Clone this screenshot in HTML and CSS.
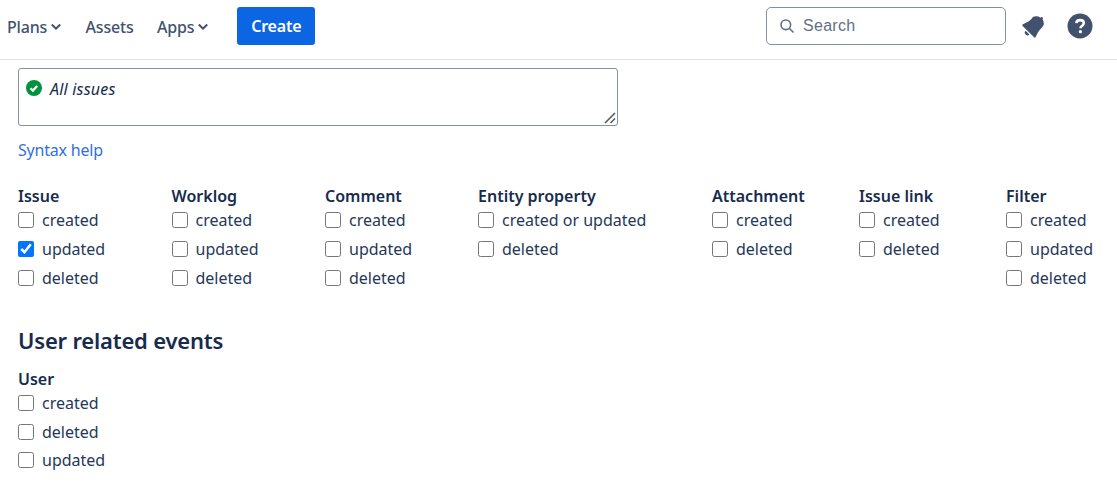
FILE: index.html
```html
<!DOCTYPE html>
<html lang="en">

<head>
    <meta charset="UTF-8">
    <title>Webhook</title>
    <link rel="stylesheet" href="styles.css">
</head>

<body>
    <nav class="topbar">
        <a class="nav-item">Plans
            <svg class="chevron" viewBox="0 0 12 8"><path d="M1.800 1.500 6 5.700l4.200-4.200" /></svg>
        </a>
        <a class="nav-item">Assets</a>
        <a class="nav-item">Apps
            <svg class="chevron" viewBox="0 0 12 8"><path d="M1.800 1.500 6 5.700l4.200-4.200" /></svg>
        </a>
        <button class="create-btn">Create</button>
        <div class="search">
            <svg class="search-icon" viewBox="0 0 16 16"><circle cx="6.800" cy="6.800" r="4.800" /><path d="m10.500 10.500 4 4" /></svg>
            <span>Search</span>
        </div>
        <svg class="bell" viewBox="0 0 24 24">
            <path d="M6.485 17.669a2 2 0 0 0 2.829 0l-2.829-2.83a2 2 0 0 0 0 2.83zm4.897-12.191l-.725.725c-.782.782-2.21 1.813-3.206 2.311l-3.017 1.509c-.495.248-.584.774-.187 1.171l8.556 8.556c.398.396.922.313 1.171-.188l1.51-3.016c.494-.988 1.526-2.42 2.311-3.206l.725-.726a5.048 5.048 0 0 0 .64-6.356 1.01 1.01 0 1 0-1.557-1.27 5.047 5.047 0 0 0-6.72.49z" />
        </svg>
        <svg class="help" viewBox="0 0 26 26">
            <circle cx="13" cy="13" r="12.500" />
            <path class="help-mark" d="M9.300 10.200c.2-2 1.700-3.100 3.800-3.100s3.700 1.200 3.700 3c0 1.500-.9 2.200-1.900 2.900-.9.600-1.400 1.100-1.400 2.200" />
            <circle class="help-dot" cx="13.400" cy="18.700" r="1.600" />
        </svg>
    </nav>

    <main class="content">
        <div class="jql-box">
            <svg class="ok-icon" viewBox="0 0 16 16">
                <circle cx="8" cy="8" r="8" />
                <path d="m4.500 8.300 2.400 2.300 4.300-4.600" />
            </svg>
            <i>All issues</i>
            <svg class="resize-grip" viewBox="0 0 12 12"><path d="M1 11 11 1M6.500 11 11 6.500" /></svg>
        </div>
        <a class="syntax-link">Syntax help</a>

        <div class="event-groups">
            <section>
                <h4>Issue</h4>
                <label><input type="checkbox">created</label>
                <label><input type="checkbox" checked>updated</label>
                <label><input type="checkbox">deleted</label>
            </section>
            <section>
                <h4>Worklog</h4>
                <label><input type="checkbox">created</label>
                <label><input type="checkbox">updated</label>
                <label><input type="checkbox">deleted</label>
            </section>
            <section>
                <h4>Comment</h4>
                <label><input type="checkbox">created</label>
                <label><input type="checkbox">updated</label>
                <label><input type="checkbox">deleted</label>
            </section>
            <section>
                <h4>Entity property</h4>
                <label><input type="checkbox">created or updated</label>
                <label><input type="checkbox">deleted</label>
            </section>
            <section>
                <h4>Attachment</h4>
                <label><input type="checkbox">created</label>
                <label><input type="checkbox">deleted</label>
            </section>
            <section>
                <h4>Issue link</h4>
                <label><input type="checkbox">created</label>
                <label><input type="checkbox">deleted</label>
            </section>
            <section>
                <h4>Filter</h4>
                <label><input type="checkbox">created</label>
                <label><input type="checkbox">updated</label>
                <label><input type="checkbox">deleted</label>
            </section>
        </div>

        <h3>User related events</h3>
        <section class="user-events">
            <h4>User</h4>
            <label><input type="checkbox">created</label>
            <label><input type="checkbox">deleted</label>
            <label><input type="checkbox">updated</label>
        </section>
    </main>
</body>

</html>
```

FILE: styles.css
```css
body {
    font-family: "Noto Sans", "Open Sans", sans-serif;
    font-size: 16px;
    color: #172b4d;
    background-color: #fff;
    margin: 0;
    overflow: hidden;
}

.topbar {
    display: flex;
    align-items: center;
    height: 59px;
    box-sizing: border-box;
    padding: 0 0 7px 7px;
    box-shadow: 0 1px 0 #dfe1e6;
    color: #42526e;
}

.nav-item {
    display: flex;
    align-items: center;
    gap: 3px;
    margin-top: 2px;
    margin-right: 23.500px;
    font-size: 16px;
    font-weight: 500;
    letter-spacing: -0.2px;
}

.chevron {
    width: 12px;
    height: 8px;
    fill: none;
    stroke: #42526e;
    stroke-width: 2;
}

.create-btn {
    width: 78px;
    height: 38px;
    margin-left: 4.500px;
    border: none;
    border-radius: 3px;
    background-color: #0c66e4;
    color: #fff;
    font: 600 16px "Noto Sans", sans-serif;
    letter-spacing: -0.2px;
}

.search {
    display: flex;
    align-items: center;
    gap: 8px;
    width: 240px;
    height: 38px;
    margin-left: auto;
    padding-left: 12px;
    box-sizing: border-box;
    border: 1px solid #8590a2;
    border-radius: 5px;
    color: #626f86;
    font-family: "Liberation Sans", Arial, sans-serif;
    letter-spacing: 0.3px;
}

.search-icon {
    width: 16px;
    height: 16px;
    fill: none;
    stroke: #626f86;
    stroke-width: 1.600;
}

.bell {
    width: 32px;
    height: 32px;
    margin-top: 1px;
    margin-left: 11px;
    fill: #42526e;
}

.help {
    width: 26px;
    height: 26px;
    margin-left: 18px;
    margin-right: 24px;
    fill: #42526e;
}

.help-mark {
    fill: none;
    stroke: #fff;
    stroke-width: 2.600;
}

.help-dot {
    fill: #fff;
}

.content {
    padding: 9px 18px 0;
}

.jql-box {
    position: relative;
    display: flex;
    align-items: flex-start;
    gap: 8px;
    width: 600px;
    height: 58px;
    box-sizing: border-box;
    padding: 10px 7px 0;
    border: 1px solid #8590a2;
    border-radius: 3px;
    line-height: 20px;
    letter-spacing: 0.2px;
}

.ok-icon {
    width: 16px;
    height: 16px;
    margin-top: 1px;
    fill: #00923f;
}

.ok-icon path {
    fill: none;
    stroke: #fff;
    stroke-width: 2.200;
}

.resize-grip {
    position: absolute;
    right: 1px;
    bottom: 1px;
    width: 12px;
    height: 12px;
    fill: none;
    stroke: #555;
    stroke-width: 1.500;
}

.syntax-link {
    display: block;
    margin-top: 13px;
    line-height: 22px;
    letter-spacing: -0.2px;
    color: #2f6fe0;
}

.event-groups {
    display: grid;
    grid-template-columns: 153.500px 153.500px 153px 234px 147px 147px auto;
    margin-top: 27px;
}

h4 {
    margin: 0;
    font-size: 16px;
    font-weight: 600;
    line-height: 19px;
    color: #172b4d;
}

.event-groups h4 {
    line-height: 17px;
}

h3 {
    margin: 33px 0 15px;
    font-size: 22px;
    font-weight: 600;
    line-height: 30px;
    letter-spacing: -0.2px;
}

label {
    display: flex;
    align-items: center;
    height: 29px;
    white-space: nowrap;
    color: #253858;
}

.user-events label {
    height: 28.600px;
}

input[type="checkbox"] {
    width: 16px;
    height: 16px;
    margin: 0 8px 0 0;
    flex-shrink: 0;
}
```
